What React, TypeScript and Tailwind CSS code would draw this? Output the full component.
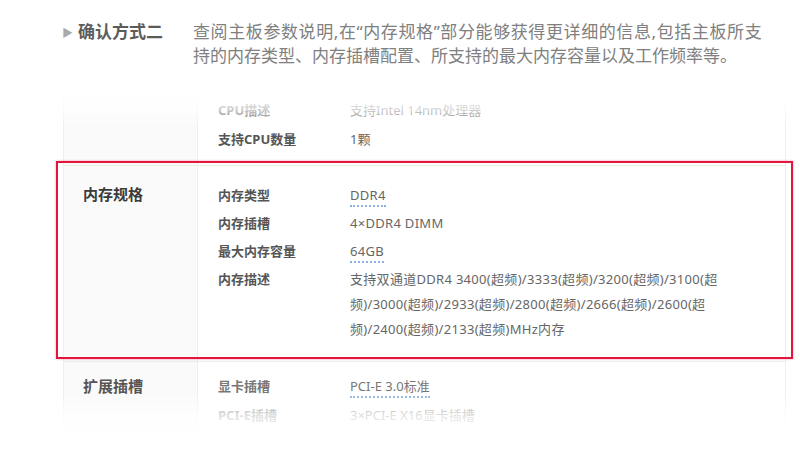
import React from 'react';

const FONT = '"Noto Sans", "Noto Sans CJK SC", sans-serif';

function Row({ label, value, dotted = false }: { label: string; value: string; dotted?: boolean }) {
  return (
    <div className="flex h-[28px] items-center">
      <div className="w-[132px] text-[13px] font-bold text-[#555]">{label}</div>
      <div className="text-[13px] tracking-[0.3px] text-[#666]">
        {dotted ? (
          <span className="border-b-2 border-dotted border-[#8db0e0] pb-[1px]">{value}</span>
        ) : (
          value
        )}
      </div>
    </div>
  );
}

export default function App() {
  return (
    <div
      className="relative w-[800px] h-[460px] overflow-hidden bg-white"
      style={{ fontFamily: FONT }}
    >
      {/* 说明 */}
      <div className="flex pt-[20px]">
        <div className="flex w-[193px] items-start pl-[62px]">
          <span className="mt-[1px] text-[11px] leading-[24px] text-[#aaa]">▶</span>
          <span className="ml-[5px] text-[17px] font-bold leading-[24px] text-[#5c5c5c]">确认方式二</span>
        </div>
        <p className="text-[17px] leading-[24px] text-[#808080]">
          <span className="tracking-[0.6px]">查阅主板参数说明,在“内存规格”部分能够获得更详细的信息,包括主板所支</span>
          <br />
          持的内存类型、内存插槽配置、所支持的最大内存容量以及工作频率等。
        </p>
      </div>

      {/* 参数表 */}
      <div className="relative ml-[63px] mt-[24px] w-[723px] border-x border-[#eee]">
        {/* CPU */}
        <div className="flex">
          <div className="w-[134px] shrink-0 bg-[#fafafa] border-r border-[#eee]" />
          <div className="flex-1 pl-[20px] pt-[4px] pb-[11px]">
            <div className="flex h-[29px] items-center">
              <div className="w-[132px] text-[13px] font-bold text-[#555]">CPU描述</div>
              <div className="text-[13px] text-[#666]">支持Intel 14nm处理器</div>
            </div>
            <div className="flex h-[29px] items-center">
              <div className="w-[132px] text-[13px] font-bold text-[#555]">支持CPU数量</div>
              <div className="text-[13px] text-[#666]">1颗</div>
            </div>
          </div>
        </div>

        {/* 内存规格 */}
        <div className="relative flex border-t border-[#eee]">
          <div className="w-[134px] shrink-0 bg-[#fafafa] border-r border-[#eee] pl-[19px] pt-[18px]">
            <div className="text-[15px] font-bold leading-[20px] text-[#3a3a3a]">内存规格</div>
          </div>
          <div className="flex-1 pl-[20px] pt-[16px] pb-[19px]">
            <Row label="内存类型" value="DDR4" dotted />
            <Row label="内存插槽" value="4×DDR4 DIMM" />
            <Row label="最大内存容量" value="64GB" dotted />
            <div className="mt-[1px] flex">
              <div className="w-[132px] text-[13px] font-bold leading-[25px] text-[#555]">内存描述</div>
              <div className="text-[13px] leading-[25px] tracking-[0.3px] text-[#666]">
                支持双通道DDR4 3400(超频)/3333(超频)/3200(超频)/3100(超
                <br />
                频)/3000(超频)/2933(超频)/2800(超频)/2666(超频)/2600(超
                <br />
                频)/2400(超频)/2133(超频)MHz内存
              </div>
            </div>
          </div>
          <div className="pointer-events-none absolute -top-[5px] bottom-[2px] -left-[8px] -right-[8px] border-2 border-[#e2163c] shadow-[0_0_2px_rgba(226,22,60,0.45)]" />
        </div>

        {/* 扩展插槽 */}
        <div className="flex border-t border-[#eee]">
          <div className="w-[134px] shrink-0 bg-[#fafafa] border-r border-[#eee] pl-[19px] pt-[14px]">
            <div className="text-[15px] font-bold leading-[20px] text-[#555]">扩展插槽</div>
          </div>
          <div className="flex-1 pl-[20px] pt-[10px] pb-[4px]">
            <div className="flex h-[29px] items-center">
              <div className="w-[132px] text-[13px] font-bold text-[#777]">显卡插槽</div>
              <div className="text-[13px] text-[#777]">
                <span className="border-b-2 border-dotted border-[#8db0e0] pb-[1px]">PCI-E 3.0标准</span>
              </div>
            </div>
            <div className="flex h-[29px] items-center">
              <div className="w-[132px] text-[13px] font-bold text-[#777]">PCI-E插槽</div>
              <div className="text-[13px] text-[#777]">3×PCI-E X16显卡插槽</div>
            </div>
          </div>
        </div>

        {/* 上下淡出 */}
        <div className="pointer-events-none absolute left-[-2px] right-[-2px] top-0 h-[36px] bg-gradient-to-b from-white via-white/70 to-white/0" />
        <div className="pointer-events-none absolute left-[-2px] right-[-2px] bottom-0 h-[40px] bg-gradient-to-t from-white via-white/75 to-white/0" />
      </div>
    </div>
  );
}
